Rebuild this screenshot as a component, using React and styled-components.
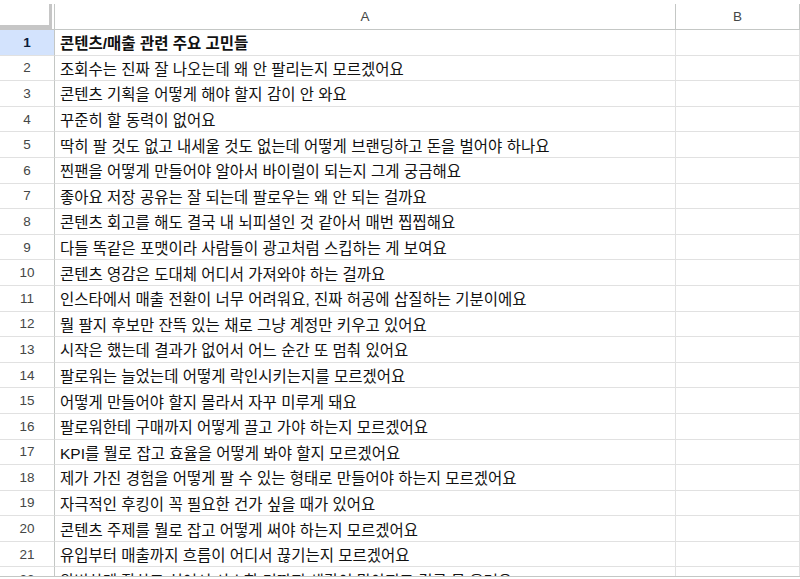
import React from 'react';
import styled, { createGlobalStyle } from 'styled-components';

const lineColor = '#e1e1e1';
const headerLine = '#c4c7c5';
const freezeGray = '#c6c6c6';
const selectedBlue = '#d3e3fd';

const rows = [
    '콘텐츠/매출 관련 주요 고민들',
    '조회수는 진짜 잘 나오는데 왜 안 팔리는지 모르겠어요',
    '콘텐츠 기획을 어떻게 해야 할지 감이 안 와요',
    '꾸준히 할 동력이 없어요',
    '딱히 팔 것도 없고 내세울 것도 없는데 어떻게 브랜딩하고 돈을 벌어야 하나요',
    '찐팬을 어떻게 만들어야 알아서 바이럴이 되는지 그게 궁금해요',
    '좋아요 저장 공유는 잘 되는데 팔로우는 왜 안 되는 걸까요',
    '콘텐츠 회고를 해도 결국 내 뇌피셜인 것 같아서 매번 찝찝해요',
    '다들 똑같은 포맷이라 사람들이 광고처럼 스킵하는 게 보여요',
    '콘텐츠 영감은 도대체 어디서 가져와야 하는 걸까요',
    '인스타에서 매출 전환이 너무 어려워요, 진짜 허공에 삽질하는 기분이에요',
    '뭘 팔지 후보만 잔뜩 있는 채로 그냥 계정만 키우고 있어요',
    '시작은 했는데 결과가 없어서 어느 순간 또 멈춰 있어요',
    '팔로워는 늘었는데 어떻게 락인시키는지를 모르겠어요',
    '어떻게 만들어야 할지 몰라서 자꾸 미루게 돼요',
    '팔로워한테 구매까지 어떻게 끌고 가야 하는지 모르겠어요',
    'KPI를 뭘로 잡고 효율을 어떻게 봐야 할지 모르겠어요',
    '제가 가진 경험을 어떻게 팔 수 있는 형태로 만들어야 하는지 모르겠어요',
    '자극적인 후킹이 꼭 필요한 건가 싶을 때가 있어요',
    '콘텐츠 주제를 뭘로 잡고 어떻게 써야 하는지 모르겠어요',
    '유입부터 매출까지 흐름이 어디서 끊기는지 모르겠어요',
    '완벽하게 잘하고 싶어서 사소한 것까지 생각이 많아지고 결국 못 올려요',
];

const GlobalStyle = createGlobalStyle`
    html, body {
        margin: 0;
        padding: 0;
        background: #ffffff;
    }
`;

const Page = styled.div`
    height: 577px;
    overflow: hidden;
    border-bottom: 1px solid ${headerLine};
    padding-top: 4px;
    box-sizing: border-box;
    font-family: "Liberation Sans", "Noto Sans CJK KR", sans-serif;
`;

const Grid = styled.div`
    display: grid;
    grid-template-columns: 55px 621px 124px;
    grid-template-rows: 26px;
    grid-auto-rows: 25.6px;
`;

const Corner = styled.div`
    border-right: 1px solid ${headerLine};
    border-bottom: 1px solid ${headerLine};
    box-sizing: border-box;
    background: #fff;
`;

const CornerBar = styled.div`
    width: 52px;
    height: 26px;
    box-sizing: border-box;
    border-right: 3px solid ${freezeGray};
    border-bottom: 5px solid ${freezeGray};
`;

const ColHeader = styled.div`
    display: flex;
    align-items: center;
    justify-content: center;
    border-right: 1px solid ${headerLine};
    border-bottom: 1px solid ${headerLine};
    box-sizing: border-box;
    font-size: 13.5px;
    color: #444746;
`;

const RowNum = styled.div`
    display: flex;
    align-items: center;
    justify-content: center;
    border-right: 1px solid ${headerLine};
    border-bottom: 1px solid ${lineColor};
    box-sizing: border-box;
    font-size: 13.5px;
    color: ${p => (p.$selected ? '#0b1d3a' : '#444746')};
    font-weight: ${p => (p.$selected ? 700 : 400)};
    background: ${p => (p.$selected ? selectedBlue : '#fff')};
`;

const Cell = styled.div`
    display: flex;
    align-items: center;
    padding-left: 5px;
    border-right: 1px solid ${lineColor};
    border-bottom: 1px solid ${lineColor};
    box-sizing: border-box;
    white-space: nowrap;
    font-size: 15.5px;
    color: #111;
    font-weight: ${p => (p.$bold ? 700 : 400)};
`;

export default function App() {
    return (
        <>
            <GlobalStyle />
            <Page>
                <Grid>
                    <Corner>
                        <CornerBar />
                    </Corner>
                    <ColHeader>A</ColHeader>
                    <ColHeader>B</ColHeader>

                    {rows.map((text, i) => (
                        <React.Fragment key={i}>
                            <RowNum $selected={i === 0}>{i + 1}</RowNum>
                            <Cell $bold={i === 0}>{text}</Cell>
                            <Cell />
                        </React.Fragment>
                    ))}
                </Grid>
            </Page>
        </>
    );
}
